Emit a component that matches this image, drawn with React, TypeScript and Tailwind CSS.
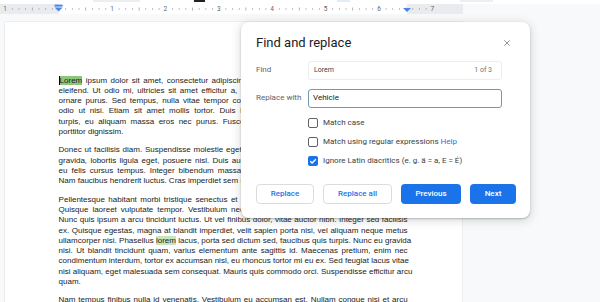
import React from "react";
import { X } from "lucide-react";

type Line = React.ReactNode;

const cursorHit = (
  <span className="border-l border-black bg-[#8cc67a]">Lorem</span>
);
const softHit = <span className="bg-[#c8e6bb]">lorem</span>;

const paragraphs: Line[][] = [
  [
    <>{cursorHit} ipsum dolor sit amet, consectetur adipiscing elit. Aenean quis metus sed diam tincidunt</>,
    "eleifend. Ut odio mi, ultricies sit amet efficitur a, blandit vel purus. Vivamus sed nulla vel felis",
    "ornare purus. Sed tempus, nulla vitae tempor convallis, nibh augue feugiat arcu, sed semper",
    "odio ut nisi. Etiam sit amet mollis tortor. Duis iaculis ligula at velit rhoncus, ac vestibulum",
    "turpis, eu aliquam massa eros nec purus. Fusce lobortis, mi vel sagittis ultrices, nisi lectus",
    "porttitor dignissim.",
  ],
  [
    "Donec ut facilisis diam. Suspendisse molestie eget mauris in dapibus. Morbi vel ultricies justo, at",
    "gravida, lobortis ligula eget, posuere nisl. Duis auctor mattis ante, vitae consequat nulla dictum",
    "eu felis cursus tempus. Integer bibendum massa ut nulla pretium, vel vulputate arcu fringilla.",
    "Nam faucibus hendrerit luctus. Cras imperdiet sem non orci placerat.",
  ],
  [
    "Pellentesque habitant morbi tristique senectus et netus et malesuada fames ac turpis egestas.",
    "Quisque laoreet vulputate tempor. Vestibulum nec risus vel lectus feugiat finibus vel non est.",
    "Nunc quis ipsum a arcu tincidunt luctus. Ut vel finibus dolor, vitae auctor nibh. Integer sed facilisis",
    "ex. Quisque egestas, magna at blandit imperdiet, velit sapien porta nisi, vel aliquam neque metus",
    <>ullamcorper nisi. Phasellus {softHit} lacus, porta sed dictum sed, faucibus quis turpis. Nunc eu gravida</>,
    "nisi. Ut blandit tincidunt quam, varius elementum ante sagittis id. Maecenas pretium, enim nec",
    "condimentum interdum, tortor ex accumsan nisl, eu rhoncus tortor mi eu ex. Sed feugiat lacus vitae",
    "nisi aliquam, eget malesuada sem consequat. Mauris quis commodo orci. Suspendisse efficitur arcu",
    "quam.",
  ],
  [
    "Nam tempus finibus nulla id venenatis. Vestibulum eu accumsan est. Nullam congue nisi et arcu",
    "tempor, in consequat lectus cursus.",
  ],
];

const Ruler = () => {
  const zero = 58.6;
  const inch = 53.4;
  const ticks: number[] = [];
  for (let i = -8; i <= 56; i++) {
    const x = zero + (i * inch) / 8;
    if (x > 1 && x < 462 && i % 8 !== 0) ticks.push(i);
  }
  return (
    <svg width="600" height="10" className="block">
      <rect x="0" y="0" width="463" height="10" fill="#e9ebee" />
      <rect x="58.6" y="0" width="348.4" height="10" fill="#ffffff" />
      {ticks.map((i) => {
        const x = zero + (i * inch) / 8;
        const h = i % 4 === 0 ? 3 : 1.6;
        return (
          <rect key={i} x={x} y={5 - h / 2} width="0.8" height={h} fill="#9aa0a6" />
        );
      })}
      {[-1, 1, 2, 3, 4, 5, 6, 7].map((n) => (
        <text
          key={n}
          x={zero + n * inch}
          y="7.3"
          fontSize="6.5"
          fill="#5f6368"
          textAnchor="middle"
          fontFamily="Roboto, sans-serif"
        >
          {Math.abs(n)}
        </text>
      ))}
      <rect x="54.6" y="0.6" width="8" height="2" fill="#4a86e8" />
      <path d="M54.6 3.6 H62.6 L58.6 7.6 Z" fill="#4a86e8" />
      <path d="M403 4 H411 L407 8 Z" fill="#4a86e8" />
    </svg>
  );
};

const Checkbox = ({ checked, children }: { checked?: boolean; children: React.ReactNode }) => (
  <div className="flex h-[19px] items-center pl-[52px]">
    {checked ? (
      <div className="flex h-[10px] w-[10px] items-center justify-center rounded-[2px] bg-[#1a73e8]">
        <svg width="8" height="8" viewBox="0 0 8 8">
          <path d="M1.3 4.2 L3.1 6 L6.8 2.2" stroke="#fff" strokeWidth="1.3" fill="none" />
        </svg>
      </div>
    ) : (
      <div className="h-[10px] w-[10px] rounded-[2px] border-[1.4px] border-[#5f6368]" />
    )}
    <span className="ml-[5px] text-[8px] leading-[10px] text-[#3c4043]">{children}</span>
  </div>
);

export default function App() {
  return (
    <div className="relative h-[302px] w-[600px] overflow-hidden bg-[#f8f9fa] font-['Liberation_Sans',Arial,sans-serif]">
      <div className="flex h-[4px] items-start bg-white">
        <div className="ml-[93px] h-[2px] w-[47px] bg-[#eceef0]" />
        <div className="ml-[54px] h-[2px] w-[11px] bg-[#202124]" />
        <div className="ml-[132px] h-[2px] w-[13px] bg-[#e3ebf8]" />
        <div className="ml-[110px] h-[2px] w-[33px] bg-[#eceef0]" />
      </div>
      <Ruler />
      <div className="mt-[8px] flex">
        <div className="ml-[5px] h-[290px] w-[457px] bg-white pl-[53.6px] pt-[53.5px] shadow-[0_0_0_1px_#eceef0]">
          <div className="w-[349px] text-[8px] leading-[10.3px] text-[#222]">
            {paragraphs.map((p, pi) => (
              <div key={pi} className="mb-[8.1px]">
                {p.map((line, li) => (
                  <div
                    key={li}
                    className={
                      li === p.length - 1
                        ? "whitespace-nowrap"
                        : "whitespace-nowrap text-justify [text-align-last:justify]"
                    }
                  >
                    {line}
                  </div>
                ))}
              </div>
            ))}
          </div>
        </div>
      </div>

      <div className="absolute left-[241px] top-[22px] h-[196px] w-[289px] rounded-[8px] bg-white pl-[15px] pr-[14px] pt-[13px] font-['Roboto',sans-serif] shadow-[0_1px_2px_rgba(60,64,67,0.3),0_2px_8px_2px_rgba(60,64,67,0.15)]">
        <div className="flex h-[15px] items-center justify-between">
          <span className="text-[13px] leading-[15px] text-[#202124]">Find and replace</span>
          <X size={10} strokeWidth={1.6} className="mr-[4px] text-[#5f6368]" />
        </div>
        <div className="mt-[10.7px] flex items-center">
          <span className="w-[52px] text-[8px] text-[#5f6368]">Find</span>
          <div className="flex h-[19px] w-[194px] items-center justify-between rounded-[3px] border border-[#eceef0] px-[5px] text-[7px]">
            <span className="text-[#3c4043]">Lorem</span>
            <span className="mr-[4px] text-[#70757a]">1 of 3</span>
          </div>
        </div>
        <div className="mt-[9px] flex items-center">
          <span className="w-[52px] text-[8px] text-[#5f6368]">Replace with</span>
          <div className="flex h-[19px] w-[194px] items-center rounded-[3px] border border-[#6d9bb4] px-[4px] text-[8px] text-[#202124]">
            Vehicle
          </div>
        </div>
        <div className="mt-[5.5px]">
          <Checkbox>Match case</Checkbox>
          <Checkbox>
            Match using regular expressions <span className="text-[#1a73e8]">Help</span>
          </Checkbox>
          <Checkbox checked>Ignore Latin diacritics (e. g. ä = a, E = É)</Checkbox>
        </div>
        <div className="mt-[14px] flex gap-[9px] text-[8px] font-medium">
          <button className="h-[20px] w-[58px] rounded-[4px] border border-[#dadce0] text-[#1a73e8]">Replace</button>
          <button className="h-[20px] w-[69px] rounded-[4px] border border-[#dadce0] text-[#1a73e8]">Replace all</button>
          <button className="h-[20px] w-[60px] rounded-[4px] bg-[#1a73e8] text-white">Previous</button>
          <button className="h-[20px] w-[46px] rounded-[4px] bg-[#1a73e8] text-white">Next</button>
        </div>
      </div>
    </div>
  );
}
